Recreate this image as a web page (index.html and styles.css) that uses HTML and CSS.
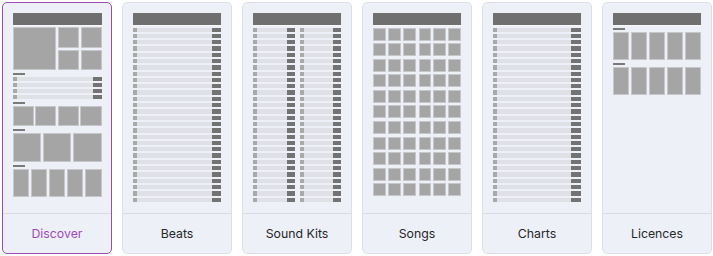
FILE: index.html
```html
<!DOCTYPE html>
<html lang="en">

<head>
  <meta charset="UTF-8">
  <meta name="viewport" content="width=device-width, initial-scale=1.0">
  <title>Layouts</title>
  <link rel="stylesheet" href="styles.css">
</head>

<body>

  <div class="cards">

    <!-- Discover -->
    <div class="card active">
      <div class="preview">
        <div class="pv-head"></div>
        <div class="pv-stack">
          <div class="hero">
            <div class="blk big"></div>
            <div class="blk"></div>
            <div class="blk"></div>
            <div class="blk"></div>
            <div class="blk"></div>
          </div>
          <div class="sec-label"></div>
          <div class="list short">
            <div class="row"><i></i><b></b><u></u></div>
            <div class="row"><i></i><b></b><u></u></div>
            <div class="row"><i></i><b></b><u></u></div>
            <div class="row"><i></i><b></b><u></u></div>
          </div>
          <div class="sec-label"></div>
          <div class="tiles cols-4 h20">
            <div class="blk"></div><div class="blk"></div><div class="blk"></div><div class="blk"></div>
          </div>
          <div class="sec-label"></div>
          <div class="tiles cols-3 h29">
            <div class="blk"></div><div class="blk"></div><div class="blk"></div>
          </div>
          <div class="sec-label"></div>
          <div class="tiles cols-5 h28">
            <div class="blk"></div><div class="blk"></div><div class="blk"></div><div class="blk"></div><div class="blk"></div>
          </div>
        </div>
      </div>
      <div class="card-label">Discover</div>
    </div>

    <!-- Beats -->
    <div class="card">
      <div class="preview">
        <div class="pv-head"></div>
        <div class="list long" data-rows="28"></div>
      </div>
      <div class="card-label">Beats</div>
    </div>

    <!-- Sound Kits -->
    <div class="card">
      <div class="preview">
        <div class="pv-head"></div>
        <div class="split">
          <div class="list long narrow" data-rows="28"></div>
          <div class="list long narrow" data-rows="28"></div>
        </div>
      </div>
      <div class="card-label">Sound Kits</div>
    </div>

    <!-- Songs -->
    <div class="card">
      <div class="preview">
        <div class="pv-head"></div>
        <div class="song-grid" data-cells="66"></div>
      </div>
      <div class="card-label">Songs</div>
    </div>

    <!-- Charts -->
    <div class="card">
      <div class="preview">
        <div class="pv-head"></div>
        <div class="list long wide-end" data-rows="28"></div>
      </div>
      <div class="card-label">Charts</div>
    </div>

    <!-- Licences -->
    <div class="card">
      <div class="preview">
        <div class="pv-head"></div>
        <div class="lic-stack">
          <div class="sec-label"></div>
          <div class="tiles cols-5 h28">
            <div class="blk"></div><div class="blk"></div><div class="blk"></div><div class="blk"></div><div class="blk"></div>
          </div>
          <div class="sec-label"></div>
          <div class="tiles cols-5 h28">
            <div class="blk"></div><div class="blk"></div><div class="blk"></div><div class="blk"></div><div class="blk"></div>
          </div>
        </div>
      </div>
      <div class="card-label">Licences</div>
    </div>

  </div>

  <script>
    // fill the long track lists
    document.querySelectorAll('.list[data-rows]').forEach(list => {
      const n = Number(list.dataset.rows);
      for (let i = 0; i < n; i++) {
        const row = document.createElement('div');
        row.className = 'row';
        row.innerHTML = '<i></i><b></b><u></u>';
        list.appendChild(row);
      }
    });

    // fill the songs grid
    document.querySelectorAll('.song-grid').forEach(grid => {
      const n = Number(grid.dataset.cells);
      for (let i = 0; i < n; i++) {
        const cell = document.createElement('div');
        cell.className = 'blk';
        grid.appendChild(cell);
      }
    });
  </script>

</body>
</html>
```

FILE: styles.css
```css
* {
  box-sizing: border-box;
}

body {
  margin: 0;
  padding: 2px 0 0 2px;
  background: #ffffff;
  font-family: "Inter", "Noto Sans", sans-serif;
}

.cards {
  display: flex;
  gap: 10px;
}

.card {
  width: 110px;
  height: 252px;
  display: flex;
  flex-direction: column;
  background: #eef0f8;
  border: 1px solid #dcdfe7;
  border-radius: 5px;
}

.card.active {
  border: 1.5px solid #9b4cb9;
}

.preview {
  flex: 1;
  padding: 10px 10px 0 10px;
}

.card.active .preview {
  padding: 9.5px 9.5px 0 9.5px;
}

.card-label {
  height: 40px;
  border-top: 1px solid #d9dce4;
  display: flex;
  align-items: center;
  justify-content: center;
  font-size: 12.3px;
  color: #262626;
  padding-bottom: 1px;
}

.card.active .card-label {
  color: #9b4cb9;
}

/* thumbnail pieces */
.pv-head {
  height: 12px;
  background: #6f6f6f;
  border-bottom: 1.5px solid #f7f7fa;
  box-sizing: content-box;
  margin-bottom: 1.5px;
}

.blk {
  background: #a5a5a5;
  border: 1px solid #c6c7cb;
}

.sec-label {
  width: 12px;
  height: 2px;
  background: #7a7a7a;
}

.pv-stack {
  display: flex;
  flex-direction: column;
  gap: 2.5px;
}

.hero {
  display: grid;
  grid-template-columns: 43px 1fr 1fr;
  grid-template-rows: 1fr 1fr;
  gap: 2px;
  height: 43px;
}

.hero .big {
  grid-row: span 2;
}

.tiles {
  display: grid;
  gap: 1.5px;
}

.cols-3 {
  grid-template-columns: repeat(3, 1fr);
  gap: 2px;
}

.cols-4 {
  grid-template-columns: repeat(4, 1fr);
}

.cols-5 {
  grid-template-columns: repeat(5, 1fr);
}

.h20 {
  height: 20px;
}

.h28 {
  height: 28px;
}

.h29 {
  height: 29px;
}

/* track list rows */
.list {
  display: flex;
  flex-direction: column;
  gap: 2px;
}

.row {
  display: flex;
  height: 4px;
}

.list.long .row {
  height: 4.3px;
}

.row i {
  width: 4px;
  background: #a9a9a9;
}

.row b {
  flex: 1;
  background: #dfe1e7;
}

.row u {
  width: 9px;
  background: #737373;
}

.list.narrow .row u {
  width: 8px;
}

.list.wide-end .row u {
  width: 10px;
}

.split {
  display: grid;
  grid-template-columns: 1fr 1fr;
  gap: 5px;
}

/* songs grid */
.song-grid {
  display: grid;
  grid-template-columns: repeat(6, 1fr);
  grid-auto-rows: 13px;
  column-gap: 2.5px;
  row-gap: 2.6px;
}

.song-grid .blk:nth-child(6n+4) {
  margin-left: 1px;
}

/* licences */
.lic-stack {
  display: flex;
  flex-direction: column;
  gap: 2.5px;
}
```
